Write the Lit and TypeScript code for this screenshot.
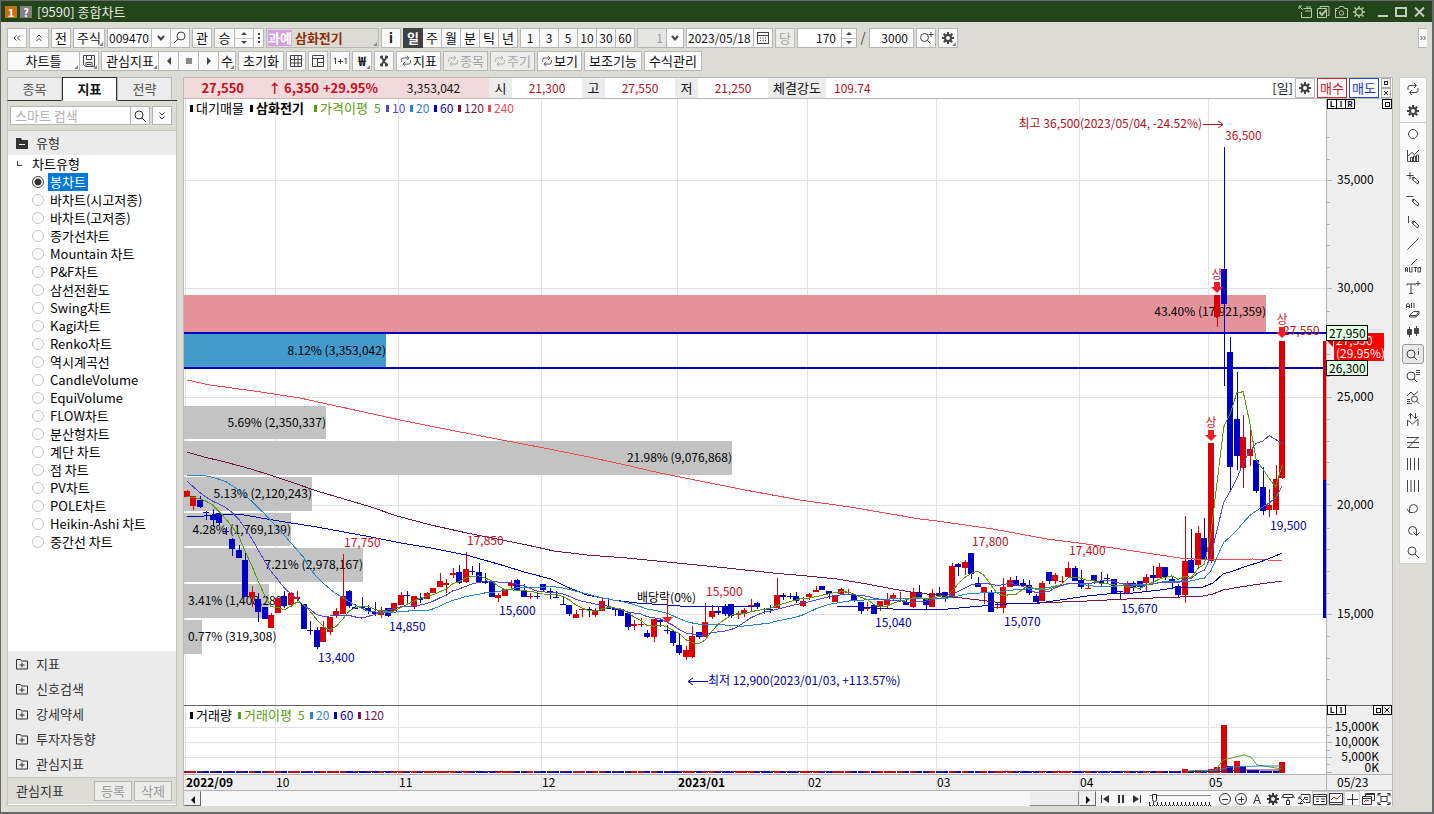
import { LitElement, html, svg, css, nothing } from "lit";
import { customElement, state, property } from "lit/decorators.js";
import { classMap } from "lit/directives/class-map.js";

/* ---------- icons ---------- */

const gearTeeth = [0, 45, 90, 135, 180, 225, 270, 315];
const gear = svg`
  ${gearTeeth.map((a) => svg`<rect x="7" y="2" width="2" height="3" fill="currentColor" stroke="none" transform="rotate(${a} 8 8)" />`)}
  <circle cx="8" cy="8" r="3" stroke-width="2" />`;
const cycle = svg`<path d="M3 9V6.5a2 2 0 0 1 2-2h6M9 2l2.500 2.500L9 7M13 7v2.500a2 2 0 0 1-2 2H5M7 9l-2.500 2.500L7 14" />`;
const lens = svg`<circle cx="7" cy="7" r="4" /><path d="M10 10l4 4" />`;
const pencil = svg`<path d="M7 8l2-1 5 5-1.500 2L8 10zM9 7l-1.500 3M12 14l2-2" />`;

const ICONS: Record<string, unknown> = {
  gear,
  cycle,
  lens,
  dblLeft: svg`<path d="M7.500 5.500L5 8l2.500 2.500M11 5.500L8.500 8l2.500 2.500" />`,
  dblUp: svg`<path d="M5.500 7.500L8 5l2.500 2.500M5.500 11L8 8.500l2.500 2.500" />`,
  dblDown: svg`<path d="M5.500 4.500L8 7l2.500-2.500M5.500 8.500L8 11l2.500-2.500" />`,
  dblRight: svg`<path d="M5.500 6l2 2-2 2M8.500 6l2 2-2 2" />`,
  down: svg`<path d="M5 6l3 3.500L11 6" stroke-width="2" />`,
  lensLeft: svg`<circle cx="9" cy="6" r="4" /><path d="M6 9l-4 4" />`,
  lensPlus: svg`<circle cx="6.500" cy="7.500" r="4" /><path d="M9.500 10.500l3 3M13 2v5M10.500 4.500h5" />`,
  dots: svg`<path d="M7 3h2v2H7zM7 7h2v2H7zM7 11h2v2H7z" fill="currentColor" stroke="none" />`,
  calendar: svg`<rect x="2.500" y="2.500" width="11" height="11" /><path d="M2 5.500h12M5 8h1M7.500 8h1M10 8h1M5 10.500h1M7.500 10.500h1M10 10.500h1" />`,
  save: svg`<path d="M2.500 2.500h11v11h-9l-2-2zM5.500 3v3.500h5V3M5 13V9.500h6V13M6 11.500h4" />`,
  left: svg`<path d="M10 4v8L6 8z" fill="currentColor" stroke="none" />`,
  right: svg`<path d="M6 4v8l4-4z" fill="currentColor" stroke="none" />`,
  stop: svg`<path d="M5 5h6v6H5z" fill="#888" stroke="none" />`,
  table: svg`<path d="M2.500 2.500h11v11h-11zM2 6.500h12M2 10h12M6.500 2v12M10 2v12" />`,
  layout: svg`<path d="M2.500 2.500h11v11h-11zM2 5.500h12M7.500 5v9M7 9.500h7" />`,
  oneToOne: svg`<path d="M2 6l1.500-1v6M12.500 6l1.500-1v6M6 8.500h5M8.500 6v5" />`,
  tool: svg`<path d="M6 2.500V5l4 6v2.500M10 2.500V5l-4 6v2.500" stroke-width="2" /><path d="M4.500 3v2.500M11.500 3v2.500M4.500 10.500V13M11.500 10.500V13" />`,
  export: svg`<path d="M2 2l4 4M2 5V2h3M6.500 4.500h8v9h-10V8M8 7h6M9 3h5" />`,
  checks: svg`<path d="M5 4V2.500h9v9H12.500M2.500 4.500h9v9h-9z" /><path d="M4.500 8l2.500 3 4-5" stroke-width="2" />`,
  camera: svg`<path d="M2.500 4.500h3l1-2h4l1 2h3v9h-12zM3 6.500h1" /><circle cx="8.500" cy="9" r="2.200" />`,
  sun: svg`<circle cx="8" cy="8" r="3.500" stroke-width="1.500" /><path d="M8 2v2M8 12v2M2 8h2M12 8h2M3.500 3.500l1.500 1.500M11 11l1.500 1.500M12.500 3.500L11 5M5 11l-1.500 1.500" stroke-width="1.500" />`,
  min: svg`<path d="M3 12h10" stroke-width="2" />`,
  max: svg`<rect x="3" y="4" width="10" height="8" stroke-width="2" />`,
  close: svg`<path d="M4 3.500l9 9M13 3.500l-9 9" stroke-width="2" />`,
  folderPlus: svg`<path d="M2.500 3.500h4l1 1.500h6v8h-11zM8 6.500v5M5.500 9h5" />`,
  folderMinus: svg`<path d="M2 3h5l1 2h6v9H2z" fill="currentColor" stroke="none" /><path d="M5 9.500h6" stroke="#fff" />`,
  circle: svg`<circle cx="8" cy="8" r="4.500" />`,
  barLine: svg`<path d="M2.500 2v11.500H14M5.500 13V9.500h2V13M8.500 13V8h2v5M11.500 13V7h2v6M3 8l4-3.500 2.500 2L14 2" />`,
  plusPen: svg`<path d="M5 2v7M1.500 5.500h7" />${pencil}`,
  hPen: svg`<path d="M1.500 4.500h7" />${pencil}`,
  vPen: svg`<path d="M3.500 2v7" />${pencil}`,
  line: svg`<path d="M2.500 13.500l11-11" />`,
  auto: svg`<path d="M6 7l6-6M.500 14v-4l1-1 1 1v4M.500 12h2M4.500 9v5h2.500V9M8.500 9.500h3.500M10.500 9v5M13 9.500h2.500V14H13z" />`,
  textPlus: svg`<path d="M2 5.500V4h8v1.500M6 4v9.500M4 13.500h4M13 1v5M10.500 3.500h5" />`,
  allErase: svg`<path d="M1.500 6V2.500l1.500-1 1.500 1V6M1.500 4.500h3M6.500 1v5M9 1v5M4.500 13.500l4-4h5.500l-3 4zM11 13.500V15l3-3.500V9.500M4.500 13.500V15H11" />`,
  candles: svg`<path d="M4.500 3v10M11.500 2v10" /><path d="M2.500 5.500h4v5h-4zM9.500 4.500h4v5h-4z" fill="currentColor" />`,
  lensInfo: svg`<circle cx="6" cy="8" r="4" /><path d="M9 11l3 3M13.500 5v4M13.500 2.500v1" />`,
  lensList: svg`<circle cx="6" cy="8" r="4" /><path d="M9 11l3 3M11 2.500h4M11 4.500h4M11 6.500h4" />`,
  zigLens: svg`<path d="M2 6l4-4 3 3 4-3.500M2 9.500h3M2 11.500h3M2 13.500h5" /><circle cx="9.500" cy="9" r="3" /><path d="M11.500 11l3 3" />`,
  zigArrows: svg`<path d="M2.500 14V8l5 4 5.500-5v7M5.500 7V1.500M3.500 3.500l2-2 2 2M10.500 1v5.500M8.500 4.500l2 2 2-2" />`,
  zLines: svg`<path d="M2 3.500h12M2 8.500h12M2 13.500h12M13 3.500l-10 10" />`,
  bars4a: svg`<path d="M2.500 2v12M5.500 2v12M9.500 2v12M13.500 2v12" />`,
  bars4b: svg`<path d="M2.500 2v12M6 2v12M9.500 2v12M13.500 2v12" />`,
  undo: svg`<path d="M4.500 8.500a4 4 0 1 1 4 4M2 9l2.500 3.500H8M4.500 12.500V8.500" />`,
  redo: svg`<path d="M11.500 8.500a4 4 0 1 0-4 4M11.500 7.500v6M8.500 10.500l3 3M14.500 10.500l-3 3" />`,
  first: svg`<path d="M4.500 4v8" /><path d="M12 4v8L6 8z" fill="currentColor" stroke="none" />`,
  pause: svg`<path d="M5 4h2v8H5zM9 4h2v8H9z" fill="currentColor" stroke="none" />`,
  last: svg`<path d="M11.500 4v8" /><path d="M4 4v8l6-4z" fill="currentColor" stroke="none" />`,
  zoomOut: svg`<circle cx="8" cy="8" r="5.500" /><path d="M5 8.500h6" />`,
  zoomIn: svg`<circle cx="8" cy="8" r="5.500" /><path d="M5 8.500h6M8.500 5.500v6" />`,
  letterForm: svg`<path d="M4.500 13L8 3.500 11.500 13M6 9.500h4" />`,
  brush: svg`<path d="M3 3.500h10v3H3zM3 5l-1.500 2M8 7v2.500M6.500 9.500h3v4h-3zM13 5l1.500 2" />`,
  windowBack: svg`<path d="M5 4.500V3.500h9v8h-4M8 6.500h4M9 8.500h3M3 6l6 6M3 8.500V6h2.500M9 7l-6 6M2 12.500h5" />`,
  sheet: svg`<path d="M1.500 3.500h13v10h-13zM2 5.500h12M4 8h3M9 8h4M4 10.500h3M9 10.500h4" />`,
  lineChart: svg`<path d="M1.500 2.500h13v11h-13zM2 11.500h12" /><path d="M3 9l3-3 3 2 4-4" stroke="#c22" />`,
  plus: svg`<path d="M8.500 3v11M3 8.500h11" />`,
  stack: svg`<path d="M5.500 5V2.500h9v7h-2M2.500 5.500h9v8h-9zM3 7.500h8M6 3.500h8" /><path d="M4 11l2-2 3 1" stroke="#c22" />`,
  expand: svg`<path d="M5 5.500h6v5H5zM2 5V2.500h3M11 2.500h3V5M14 11v2.500h-3M5 13.500H2V11M2 2.500l3 3M14 2.500l-3 3M14 13.500l-3-3M2 13.500l3-3" />`,
};

const icon = (name: string) =>
  html`<svg class="ic" viewBox="0 0 16 16" width="16" height="16" fill="none" stroke="currentColor" aria-hidden="true">${ICONS[name]}</svg>`;

const iconStyles = css`
  .ic { display: block; flex: none; width: 16px; height: 16px; }
  button, input, select { font: inherit; color: inherit; margin: 0; padding: 0; box-sizing: border-box; border-radius: 0; }
  button { cursor: pointer; }
`;

/* ---------- chart data ---------- */

// Each group: base offset, then "dir high top bottom low" rows in thirds of a pixel below y = 440.
const GROUPS: [number, string][] = [
  [0, `R 150 152 170 172|R 168 168 197 209|B 168 180 200 205|B 212 216 219 240|B 207 225 240 262|B 220 220 248 256|B 262 272 277 284|B 294 297 326 347|B 314 330 355 355|B 338 360 470 470|R 437 456 472 502|B 460 478 515 545|B 500 502 537 537|R 518 525 563 563|R 475 475 520 520|B 453 468 497 505|R 456 459 496 500|R 452 472 476 488|B 492 492 567 567|B 542 570 573 584|B 562 570 620 626|R 543 562 605 605|R 530 530 575 586|R 504 513 527 535|R 342 468 522 522|B 450 454 497 505|B 492 500 508 508|B 470 500 504 508|B 495 505 514 522|B 487 515 523 528|R 501 510 525 533|B 505 505 527 530|R 490 490 514 514|R 457 465 494 494|B 454 465 469 488|R 468 468 502 506|B 460 475 479 488|R 456 460 478 478|R 445 445 458 458|R 399 423 440 440|R 417 430 436 458|R 384 399 405 413|B 375 397 430 433|R 336 388 426 430|B 378 392 397 406|B 370 397 425 430|B 400 422 430 432|B 424 424 472 472|R 460 465 474 485|R 446 446 467 467|R 420 430 437 445|B 416 420 450 453|B 432 449 472 472|R 460 468 471 477|B 455 467 471 478|B 433 433 449 452|B 443 452 457 477|B 453 470 475 475`],
  [300, `B 170 192 196 196|B 195 195 222 228|R 210 223 233 233|R 207 207 210 232|B 200 207 210 230|R 203 210 225 230|R 172 183 212 212|B 175 203 206 206|B 205 205 210 228|B 208 208 228 228|B 220 220 261 270|R 240 252 258 270|R 235 252 255 262|B 270 280 290 293|R 238 238 290 305|B 233 240 245 262|B 255 270 274 282|B 273 273 308 318|B 280 316 340 344|R 318 330 350 360|R 257 288 350 354|B 276 276 292 298|R 190 246 292 292|R 195 213 231 236|B 202 213 220 226|B 192 202 221 228|B 193 193 227 233|R 212 223 226 236|R 204 210 223 230|R 178 195 198 213|B 186 190 202 208|B 203 208 211 222|B 196 206 209 220|R 113 165 204 204|B 158 165 170 180|B 158 168 171 178|B 155 168 183 190|R 172 184 198 202|R 158 162 172 180|R 138 150 155 155|B 139 139 150 150|B 153 153 163 177|R 166 166 186 186|R 143 147 162 162|R 147 155 160 165|B 164 164 180 186|B 186 186 213 222|R 186 200 206 213|B 194 194 221 221|R 182 182 200 214|R 160 178 195 203|R 160 166 174 182|R 157 173 176 180|B 180 187 195 195|R 145 156 200 205|B 135 156 170 178|B 178 178 195 207|R 148 160 200 200|B 141 160 167 170|B 157 157 175 185`],
  [0, `R 370 378 472 472|B 370 372 380 407|R 360 366 384 406|B 340 340 402 418|B 411 430 440 440|R 441 441 458 492|B 450 458 515 515|R 485 500 503 507|R 415 441 503 518|R 411 420 440 440|B 408 420 437 437|B 417 430 437 440|B 420 435 459 465|B 463 467 487 487|R 424 430 483 483|B 397 397 422 433|R 400 405 423 433|R 407 422 426 432|R 367 384 411 411|B 378 384 423 423|B 390 420 440 446|R 432 443 446 446|B 405 405 423 432|B 396 423 430 440|B 402 414 418 430|B 418 418 458 458|B 453 453 456 477|R 423 430 458 458|B 423 430 443 453|B 423 423 442 450|R 402 411 428 453|B 379 405 413 428|R 370 381 414 414|B 381 381 412 420|B 410 418 422 447|B 432 438 465 472|R 228 364 465 488|B 267 361 398 398|R 258 280 374 388|B 234 295 357 357|R 9 9 362 370`],
  [-990, `R 556 556 622 650|B 110 477 581 828|B 682 726 1070 1140|B 786 927 1038 1080|R 915 981 1075 1134|R 955 1018 1037 1068|B 1050 1050 1142 1150|B 1070 1131 1202 1215|R 1137 1185 1200 1220|R 1065 1107 1200 1215|R 693 693 1103 1106`],
];

interface Candle { up: boolean; x: number; high: number; top: number; bottom: number; low: number; }

const FIRST_X = 187;
const STEP = 6.48;
const xAt = (i: number) => FIRST_X + STEP * i;

const candles: Candle[] = GROUPS.flatMap(([base, rows]) =>
  rows.split("|").map((r) => {
    const [dir, ...v] = r.split(" ");
    const [high, top, bottom, low] = v.map((n) => 440 + (Number(n) + base) / 3);
    return { up: dir === "R", x: 0, high, top, bottom, low };
  }),
).map((c, i) => ({ ...c, x: Math.round(xAt(i)) }));

const closes = candles.map((c) => (c.up ? c.top : c.bottom));

// Averages reach back before the first visible bar, so their opening points are listed.
function average(period: number, opening: number[]): string {
  const pts: string[] = [];
  closes.forEach((_, i) => {
    let y: number;
    if (i < period - 1) {
      if (i >= opening.length) return;
      y = 440 + opening[i] / 3;
    } else {
      y = closes.slice(i - period + 1, i + 1).reduce((a, b) => a + b, 0) / period;
    }
    pts.push(`${xAt(i).toFixed(1)},${y.toFixed(1)}`);
  });
  return pts.join(" ");
}

const AVERAGES: { color: string; points: string }[] = [
  { color: "#f04850", points: "187,380 210,385 254,391 300,398 350,409 400,420 450,430 502,440 544,448 584,456 621,464 660,473 700,481 745,490 800,500 850,507 920,519 937,521 993,529 1047,539 1079,543 1120,549 1153,554 1180,558 1207,560 1253,559 1282,561" },
  { color: "#701845", points: "187,452 204,457 221,461 244,467 267,474 291,482 317,491 344,499 371,507 397,516 431,525 467,533 497,539 527,545 554,551 587,555 627,558 677,563 727,568 773,573 807,576 837,579 867,584 893,589 917,593 937,595 953,597 970,599 987,601 1003,603 1037,603 1087,601 1127,599 1180,597 1203,596 1213,594 1223,590 1240,587 1260,584 1282,581" },
  { color: "#0000a8", points: "187,517 204,516 221,514 244,515 267,519 291,523 317,527 344,532 371,537 401,543 431,548 466,555 484,560 505,566 524,572 551,579 567,587 587,595 613,600 637,603 667,605 693,607 760,606 837,606 860,607 893,609 948,609 970,607 1007,604 1040,603 1053,601 1087,596 1107,594 1133,593 1160,590 1180,587 1203,587 1213,583 1223,574 1233,571 1247,566 1260,562 1273,557 1282,553" },
  { color: "#2c86c4", points: average(20, [105, 105, 107, 108, 112, 118, 125, 137, 151, 167, 184, 203, 222, 243, 264, 285, 308, 330, 352]) },
  { color: "#5448d0", points: average(10, [124, 141, 158, 172, 184, 192, 203, 218, 238]) },
  { color: "#5c9a10", points: average(5, [170, 172, 177, 184]) },
];

const PROFILE = [
  { y: 295, h: 37, end: 1266, color: "#e4939b", text: "43.40% (17,921,359)" },
  { y: 334, h: 33, end: 386, color: "#449acb", text: "8.12% (3,353,042)" },
  { y: 406, h: 33, end: 326, color: "#c3c3c3", text: "5.69% (2,350,337)" },
  { y: 441, h: 34, end: 732, color: "#c3c3c3", text: "21.98% (9,076,868)" },
  { y: 477, h: 34, end: 312, color: "#c3c3c3", text: "5.13% (2,120,243)" },
  { y: 513, h: 33, end: 291, color: "#c3c3c3", text: "4.28% (1,769,139)" },
  { y: 548, h: 34, end: 363, color: "#c3c3c3", text: "7.21% (2,978,167)" },
  { y: 584, h: 34, end: 269, color: "#c3c3c3", text: "3.41% (1,408,289)" },
  { y: 620, h: 34, end: 202, color: "#c3c3c3", text: "0.77% (319,308)" },
];

const MONTHS = [
  { x: 185, label: "2022/09", bold: true }, { x: 275, label: "10" }, { x: 398, label: "11" },
  { x: 541, label: "12" }, { x: 677, label: "2023/01", bold: true }, { x: 807, label: "02" },
  { x: 936, label: "03" }, { x: 1079, label: "04" }, { x: 1208, label: "05" },
];

const PEAKS = [
  [344, 547, "17,750"], [467, 545, "17,850"], [706, 596, "15,500"], [972, 546, "17,800"],
  [1069, 555, "17,400"], [1225, 140, "36,500"], [1283, 335, "27,550"],
] as const;
const TROUGHS = [
  [318, 662, "13,400"], [389, 631, "14,850"], [499, 615, "15,600"], [875, 627, "15,040"],
  [1004, 626, "15,070"], [1121, 613, "15,670"], [1270, 530, "19,500"],
] as const;
const LIMITS = [[1217, 282], [1282, 327], [1211, 430]];

const LEGEND = [
  { x: 190, label: "대기매물", color: "#000" }, { x: 250, label: "삼화전기", color: "#000", bold: true },
  { x: 314, label: "가격이평", color: "#5c9a10", extra: "5" }, { x: 386, label: "10", color: "#5448d0" },
  { x: 410, label: "20", color: "#2c86c4" }, { x: 434, label: "60", color: "#0000a8" },
  { x: 458, label: "120", color: "#701845" }, { x: 488, label: "240", color: "#f04850" },
];
const VOL_LEGEND = [
  { x: 190, label: "거래량", color: "#000" }, { x: 238, label: "거래이평", color: "#5c9a10", extra: "5" },
  { x: 310, label: "20", color: "#2c86c4" }, { x: 334, label: "60", color: "#0000a8" },
  { x: 358, label: "120", color: "#701845" },
];

const VOL_HEIGHTS: Record<number, number> = {
  154: 4, 156: 3, 158: 4, 159: 6, 160: 48, 161: 7, 162: 12, 163: 7, 164: 3, 165: 3, 169: 11,
};
// Volume bars are coloured by the change in turnover, which differs from the candle on these days.
const VOL_UP = new Set([160, 162]);
const VOL_DOWN = new Set([163, 164, 167, 168]);

@customElement("price-chart")
export class PriceChart extends LitElement {
  static styles = css`
    :host { display: block; flex: 1; min-height: 0; background: #fff; }
    svg { display: block; width: 100%; height: 100%; }
    text { font: 12px "Noto Sans CJK KR", "Noto Sans CJK SC", sans-serif; }
    .crisp { shape-rendering: crispEdges; }
    .bold { font-weight: 700; }
    .hangul { font-size: 13px; }
    .tiny { font-size: 8px; font-weight: 700; text-anchor: middle; }
    .end { text-anchor: end; }
    .mid { text-anchor: middle; }
  `;

  private mark(x: number, y: number, label: string) {
    return svg`<rect x=${x + 0.5} y=${y + 0.5} width="9" height="9" fill="#fff" stroke="#000" class="crisp" />
      ${label === "□"
        ? svg`<rect x=${x + 3.5} y=${y + 3.5} width="4" height="4" fill="none" stroke="#000" class="crisp" />`
        : label === "×"
          ? svg`<path d="M${x + 2.5} ${y + 2.5}l5 5m0 -5l-5 5" stroke="#000" />`
          : svg`<text class="tiny" x=${x + 5} y=${y + 8}>${label}</text>`}`;
  }

  private legend(items: typeof LEGEND, y: number) {
    return items.map((l) => svg`
      <rect x=${l.x} y=${y - 8} width="3" height="7" fill=${l.color} />
      <text class=${/\d/.test(l.label) ? "" : l.bold ? "hangul bold" : "hangul"} x=${l.x + 6} y=${y} fill=${l.color}>${l.label}</text>
      ${l.extra ? svg`<text x=${l.x + 60} y=${y} fill=${l.color}>${l.extra}</text>` : nothing}`);
  }

  render() {
    const rows = [180, 288, 397, 505, 614];
    const ticks: number[] = [];
    for (let p = 37; p >= 12; p--) if (p % 5) ticks.push(Math.round(180.3 + (35 - p) * 21.7));
    return html`<svg viewBox="184 99 1208 692" preserveAspectRatio="xMinYMin meet" role="img" aria-label="삼화전기 일봉 차트">
      <rect x="1326" y="99" width="67" height="692" fill="#efefef" />
      <rect x="184" y="774" width="1142" height="17" fill="#efefef" />
      <g class="crisp" stroke="#e2e2e2">
        ${MONTHS.map((m) => svg`<path d="M${m.x + 0.5} 99V791" />`)}
        ${rows.map((y) => svg`<path d="M184 ${y + 0.5}H1326" />`)}
        ${[727, 742, 757].map((y) => svg`<path d="M184 ${y + 0.5}H1326" />`)}
      </g>
      <g class="crisp" stroke="#b4b4b4">
        <path d="M1326.500 99V791M184 774.500H1393M184 790.500H1393" />
        ${[...rows, 727, 742, 757, 772].map((y) => svg`<path d="M1326 ${y + 0.5}h6" />`)}
        ${[...ticks, 735, 750, 764].map((y) => svg`<path d="M1326 ${y + 0.5}h4" />`)}
      </g>
      <path class="crisp" d="M184 705.500H1393" stroke="#606060" />

      ${PROFILE.map((b) => svg`<rect class="crisp" x="184" y=${b.y} width=${b.end - 184} height=${b.h} fill=${b.color} />`)}
      ${PROFILE.map((b) => b.end < 290
        ? svg`<text x="188" y=${b.y + 21}>${b.text}</text>`
        : svg`<text class="end" x=${b.end} y=${b.y + 21}>${b.text}</text>`)}

      <path class="crisp" d="M184 333H1326M184 368H1326" stroke="#0000b4" stroke-width="2" />

      <g class="crisp">
        ${candles.map((c) => {
          const color = c.up ? "#dc0000" : "#0000c4";
          const top = Math.round(c.top);
          const high = Math.round(c.high);
          return svg`<rect x=${c.x} y=${high} width="1" height=${Math.max(1, Math.round(c.low) - high)} fill=${color} />
            <rect x=${c.x - 3} y=${top} width="6" height=${Math.max(1, Math.round(c.bottom) - top)} fill=${color} />`;
        })}
      </g>
      <g class="crisp" fill="none">
        ${AVERAGES.map((a) => svg`<polyline points=${a.points} stroke=${a.color} />`)}
      </g>
      <path class="crisp" d="M1324.500 341V480" stroke="#dc0000" stroke-width="3" />
      <path class="crisp" d="M1324.500 480V618" stroke="#0000c4" stroke-width="3" />

      ${this.legend(LEGEND, 113)}
      ${PEAKS.map(([x, y, t]) => svg`<text x=${x} y=${y} fill="#c8101c">${t}</text>`)}
      ${TROUGHS.map(([x, y, t]) => svg`<text x=${x} y=${y} fill="#0000a8">${t}</text>`)}
      ${LIMITS.map(([x, y]) => svg`
        <path d="M${x - 3} ${y}h6v5h3l-6 6l-6 -6h3z" fill="#f41c24" />
        <text class="mid" x=${x} y=${y - 3} fill="#d0202c">상</text>`)}
      <path d="M667.500 603V618" stroke="#dc0000" class="crisp" />
      <path d="M662 617h11l-5.500 6z" fill="#f41c24" />
      <text x="637" y="602">배당락(0%)</text>
      <text class="end" x="1202" y="128" fill="#b01018">최고 36,500(2023/05/04, -24.52%)</text>
      <path d="M1203 124.500H1223M1218 121l5 3.500l-5 3.500" stroke="#b01018" fill="none" />
      <text x="708" y="685" fill="#0000a0">최저 12,900(2023/01/03, +113.57%)</text>
      <path d="M708 681.500H688M693 678l-5 3.500l5 3.500" stroke="#0000a0" fill="none" />

      ${[35, 30, 25, 20, 15].map((p, i) => svg`<text x="1337" y=${rows[i] + 4}>${p},000</text>`)}
      <rect x="1334" y="333" width="50" height="28" fill="#ff0000" />
      <path d="M1327 341h6v6z" fill="#e00000" />
      <text x="1336" y="345" fill="#fff">27,550</text>
      <text x="1336" y="358" fill="#fff">(29.95%)</text>
      ${[[325, "27,950"], [360, "26,300"]].map(([y, t]) => svg`
        <rect class="crisp" x="1326.500" y=${Number(y) + 0.5} width="41" height="15" fill="#e0ffe0" stroke="#000" />
        <text x="1329" y=${Number(y) + 13}>${t}</text>`)}
      ${this.mark(1327, 99, "L")}${this.mark(1336, 99, "I")}${this.mark(1345, 99, "R")}${this.mark(1382, 99, "□")}

      ${this.legend(VOL_LEGEND as typeof LEGEND, 720)}
      <g class="crisp">
        ${candles.map((c, i) => {
          const h = VOL_HEIGHTS[i] ?? 2;
          const up = VOL_UP.has(i) || (c.up && !VOL_DOWN.has(i));
          return svg`<rect x=${c.x - 3} y=${773 - h} width="6" height=${h} fill=${up ? "#dc0000" : "#0000c4"} />`;
        })}
        <path d="M184 771.500H1186" stroke="#701845" stroke-dasharray="6 7" />
      </g>
      <g fill="none">
        <path d="M1186 771H1215L1223 760L1244 755L1251 757L1257 765L1270 767L1282 769" stroke="#5c9a10" />
        <path d="M1190 771L1218 770L1230 767L1258 766H1282" stroke="#2c86c4" />
        <path d="M1190 771.500H1222L1240 770H1282" stroke="#701845" />
      </g>
      <text class="end" x="1379" y="731">15,000K</text>
      <text class="end" x="1379" y="746">10,000K</text>
      <text class="end" x="1379" y="761">5,000K</text>
      <text class="end" x="1379" y="772">0K</text>
      ${this.mark(1327, 705, "L")}${this.mark(1336, 705, "I")}${this.mark(1373, 705, "□")}${this.mark(1382, 705, "×")}
      ${MONTHS.map((m) => svg`<text class=${m.bold ? "bold" : ""} x=${m.x + 1} y="787">${m.label}</text>`)}
      <text x="1337" y="787">05/23</text>
    </svg>`;
  }
}

/* ---------- left panel ---------- */

const CHART_TYPES = [
  "봉차트", "바차트(시고저종)", "바차트(고저종)", "종가선차트", "Mountain 차트", "P&F차트", "삼선전환도",
  "Swing차트", "Kagi차트", "Renko차트", "역시계곡선", "CandleVolume", "EquiVolume", "FLOW차트", "분산형차트",
  "계단 차트", "점 차트", "PV차트", "POLE차트", "Heikin-Ashi 차트", "중간선 차트",
];

@customElement("indicator-panel")
export class IndicatorPanel extends LitElement {
  @state() private selected = 0;
  @state() private tab = 1;

  static styles = [iconStyles, css`
    :host { display: flex; flex-direction: column; width: 170px; flex: none; color: #1a1a1a; }
    .tabs { display: flex; height: 24px; padding-right: 5px; border-bottom: 1px solid #303030; box-sizing: border-box; }
    .tab { flex: 1; height: 24px; border: 1px solid #b8b8b8; border-bottom: 1px solid #303030; background: #ececec; color: #555; }
    .tab.on { background: #fff; border: 1px solid #303030; border-bottom-color: #fff; font-weight: 700; color: #111; }
    .search { display: flex; padding: 5px 4px 5px 2px; height: 29px; box-sizing: border-box; border: solid #c4c4c0; border-width: 0 1px; }
    .search input { flex: 1; min-width: 0; border: 1px solid #b4b4b4; background: #fff; padding: 0 4px; }
    .search input::placeholder { color: #b0b0b0; opacity: 1; }
    .search button { width: 20px; margin-left: -1px; border: 1px solid #b4b4b4; background: #fafafa; display: grid; place-items: center; color: #333; }
    .search .more { margin-left: 2px; }
    .box { flex: 1; display: flex; flex-direction: column; border: 1px solid #c4c4c0; min-height: 0; }
    .head { display: flex; align-items: center; gap: 6px; height: 24px; padding-left: 6px; background: #ebebeb; color: #333; border: 0; width: 100%; flex: none; text-align: left; line-height: 18px; }
    .tree { flex: 1; min-height: 0; overflow: hidden; background: #fff; }
    .root { height: 18px; line-height: 18px; padding-left: 24px; position: relative; color: #000; }
    .root::before { content: ""; position: absolute; left: 9px; top: 6px; width: 4px; height: 4px; border: solid #444; border-width: 0 0 1px 1px; }
    .opt { display: flex; align-items: center; height: 18px; padding-left: 24px; gap: 4px; color: #000; }
    .opt input { appearance: none; width: 12px; height: 12px; border: 1px solid #c4c4c4; border-radius: 50%; background: #fff; flex: none; }
    .opt input:checked { border-color: #444; background: radial-gradient(circle, #333 3px, #fff 4px); }
    .opt span { line-height: 18px; padding: 0 2px; }
    .opt input:checked + span { background: #0078d7; color: #fff; }
    .groups { padding-bottom: 1px; background: #ebebeb; }
    .groups .head { height: 25px; }
    .foot { display: flex; align-items: center; height: 28px; padding: 0 4px 0 8px; border-top: 1px solid #c4c4c0; border-bottom: 1px solid #fff; gap: 2px; box-sizing: border-box; }
    .foot span { flex: 1; color: #333; }
    .foot button { width: 38px; height: 20px; border: 1px solid #b8b8b8; background: #ececea; color: #9a9a9a; line-height: 18px; }
  `];

  render() {
    return html`
      <div class="tabs" role="tablist">
        ${["종목", "지표", "전략"].map((t, i) => html`<button role="tab" class=${classMap({ tab: true, on: i === this.tab })} @click=${() => (this.tab = i)}>${t}</button>`)}
      </div>
      <div class="search">
        <input type="text" placeholder="스마트 검색" aria-label="스마트 검색" />
        <button aria-label="검색">${icon("lens")}</button>
        <button class="more" aria-label="더보기">${icon("dblDown")}</button>
      </div>
      <div class="box">
        <button class="head">${icon("folderMinus")}유형</button>
        <div class="tree">
          <div class="root">차트유형</div>
          ${CHART_TYPES.map((t, i) => html`<label class="opt"><input type="radio" name="type" .checked=${i === this.selected} @change=${() => (this.selected = i)} /><span>${t}</span></label>`)}
        </div>
        <div class="groups">
          ${["지표", "신호검색", "강세약세", "투자자동향", "관심지표"].map((t) => html`<button class="head">${icon("folderPlus")}${t}</button>`)}
        </div>
        <div class="foot"><span>관심지표</span><button disabled>등록</button><button disabled>삭제</button></div>
      </div>`;
  }
}

/* ---------- right tool strip ---------- */

const TOOLS: [string, string][] = [
  ["cycle", "새로고침"], ["gear", "설정"], ["circle", "원"], ["barLine", "차트"], ["plusPen", "십자선"], ["hPen", "수평선"],
  ["vPen", "수직선"], ["line", "추세선"], ["auto", "자동추세선"], ["textPlus", "문자"], ["allErase", "모두 지우기"], ["candles", "봉"],
  ["lensInfo", "정보"], ["lensList", "목록"], ["zigLens", "패턴 검색"], ["zigArrows", "지그재그"], ["zLines", "피보나치"],
  ["bars4a", "시간대"], ["bars4b", "등분선"], ["undo", "되돌리기"], ["redo", "다시하기"], ["lens", "확대"],
];

@customElement("tool-strip")
export class ToolStrip extends LitElement {
  static styles = [iconStyles, css`
    :host { display: flex; flex-direction: column; align-self: flex-start; width: 28px; flex: none; background: #fafafa; border: 1px solid #d0d0cc; box-sizing: border-box; color: #444; }
    button { height: 22px; border: 0; background: none; display: grid; place-items: center; }
    .sep { border-bottom: 1px solid #c8c8c8; height: 23px; }
    .on { border: 1px solid #999; border-radius: 3px; background: #e8e8e8; height: 20px; margin: 1px 2px; }
  `];
  render() {
    return TOOLS.map(([n, label], i) => html`<button class=${classMap({ sep: i === 1, on: n === "lensInfo" })} aria-label=${label}>${icon(n)}</button>`);
  }
}

/* ---------- toolbars ---------- */

@customElement("spin-buttons")
export class SpinButtons extends LitElement {
  @property() label = "";
  static styles = [iconStyles, css`
    :host { display: flex; flex-direction: column; width: 16px; height: 20px; box-sizing: border-box; border: 1px solid #b4b4b4; background: #fafafa; }
    button { flex: 1; min-height: 0; border: 0; background: none; display: grid; place-items: center; }
    button + button { border-top: 1px solid #c4c4c4; }
    svg { display: block; fill: #444; }
  `];
  render() {
    return html`<button aria-label="${this.label} 증가"><svg width="6" height="3"><path d="M0 3l3-3 3 3z" /></svg></button>
      <button aria-label="${this.label} 감소"><svg width="6" height="3"><path d="M0 0l3 3 3-3z" /></svg></button>`;
  }
}

@customElement("chart-toolbars")
export class ChartToolbars extends LitElement {
  @state() private period = 0;

  static styles = [iconStyles, css`
    :host { display: flex; flex-direction: column; gap: 3px; padding: 6px 5px 0 6px; color: #111; }
    .row { display: flex; gap: 2px; height: 20px; align-items: stretch; }
    .grp { display: flex; }
    .grp > * + * { margin-left: -1px; }
    button { position: relative; display: flex; align-items: center; justify-content: center; height: 20px; border: 1px solid #b8b8b4; background: #fafafa; white-space: nowrap; line-height: 18px; color: #111; }
    button .ic { color: #444; }
    .mono { font-size: 12px; }
    .bold { font-weight: 700; }
    .tri::after { content: ""; position: absolute; right: 1px; bottom: 1px; border: 2px solid; border-color: transparent #888 #888 transparent; }
    .dark { background: #404040; color: #fff; border-color: #404040; font-weight: 700; z-index: 1; }
    .off, .off .ic { color: #a4a4a4; }
    .off { background: #ececea; }
    .w11 { width: 11px; } .w18 { width: 18px; } .w20 { width: 20px; } .w21 { width: 21px; }
    .w32 { width: 32px; } .w45 { width: 45px; } .w46 { width: 46px; } .w58 { width: 58px; } .w73 { width: 73px; }
    .w68 { width: 68px; } .w113 { width: 113px; }
    input, select { height: 20px; border: 1px solid #b4b4b4; background: #fff; font-size: 12px; padding: 0 1px 2px; color: #111; }
    input.r { text-align: right; padding-right: 5px; }
    select { appearance: none; width: 47px; padding: 0 20px 2px 0; text-align: right; text-align-last: right; background: #e6e6e4; color: #999; opacity: 1; }
    .sel { position: relative; display: flex; }
    .sel .ic { position: absolute; right: 1px; top: 1px; padding: 1px 0; background: #fafafa; border-left: 1px solid #b4b4b4; color: #444; pointer-events: none; }
    .name { justify-content: flex-start; gap: 3px; background: #dcdbd6; color: #8c3008; font-weight: 700; padding-left: 1px; }
    .name .tag { background: #d49ee4; color: #fff; line-height: 16px; }
    .slash { width: 8px; text-align: center; line-height: 18px; color: #444; }
    .end { margin-left: auto; width: 9px; overflow: hidden; border-right: 0; }
    .tight { gap: 0; }
    .tight .ic { margin-left: -1px; width: 14px; }
  `];

  render() {
    const periods = ["일", "주", "월", "분", "틱", "년"];
    const minutes = ["1", "3", "5", "10", "30", "60"];
    return html`
      <div class="row">
        <button class="w20" aria-label="접기">${icon("dblLeft")}</button>
        <button class="w20" aria-label="위로">${icon("dblUp")}</button>
        <button class="w20">전</button>
        <button class="w32 tri">주식</button>
        <div class="grp">
          <input class="w45" type="text" .value=${"009470"} aria-label="종목코드" />
          <button class="w20" aria-label="종목 목록">${icon("down")}</button>
          <button class="w20" aria-label="종목 검색">${icon("lensLeft")}</button>
        </div>
        <button class="w20">관</button>
        <div class="grp">
          <button class="w21">승</button>
          <spin-buttons class="w20" label="종목"></spin-buttons>
          <button class="w11" aria-label="메뉴">${icon("dots")}</button>
        </div>
        <button class="w113 name tri"><span class="tag">과예</span>삼화전기</button>
        <button class="w20 bold" aria-label="종목 정보">i</button>
        <div class="grp">
          ${periods.map((p, i) => html`<button class=${classMap({ w20: true, dark: i === this.period })} @click=${() => (this.period = i)}>${p}</button>`)}
        </div>
        <div class="grp">${minutes.map((m) => html`<button class="w20 mono">${m}</button>`)}</div>
        <div class="sel"><select disabled aria-label="주기"><option>1</option></select>${icon("down")}</div>
        <div class="grp">
          <input class="w68" type="text" .value=${"2023/05/18"} aria-label="조회일" />
          <button class="w20" aria-label="달력">${icon("calendar")}</button>
        </div>
        <button class="w20 off">당</button>
        <div class="grp">
          <input class="w45 r" type="text" .value=${"170"} aria-label="표시 개수" />
          <spin-buttons label="표시 개수"></spin-buttons>
        </div>
        <span class="slash">/</span>
        <input class="w45 r" type="text" .value=${"3000"} aria-label="전체 개수" />
        <button class="w20" aria-label="조회">${icon("lensPlus")}</button>
        <button class="w20 tri" aria-label="설정">${icon("gear")}</button>
        <button class="end" aria-label="더보기">${icon("dblRight")}</button>
      </div>
      <div class="row">
        <div class="grp">
          <button class="w73 tri">차트틀</button>
          <button class="w20 tri" aria-label="저장">${icon("save")}</button>
        </div>
        <div class="grp">
          <button class="w58 tri">관심지표</button>
          <button class="w21" aria-label="이전">${icon("left")}</button>
          <button class="w21" aria-label="정지">${icon("stop")}</button>
          <button class="w21" aria-label="다음">${icon("right")}</button>
          <button class="w18 tri">수</button>
        </div>
        <button class="w46">초기화</button>
        <button class="w20" aria-label="표">${icon("table")}</button>
        <button class="w20" aria-label="분할">${icon("layout")}</button>
        <button class="w20" aria-label="1+1">${icon("oneToOne")}</button>
        <button class="w20 tri bold">₩</button>
        <button class="w20" aria-label="도구">${icon("tool")}</button>
        <button class="w45 tight">${icon("cycle")}지표</button>
        <button class="w45 tight off">${icon("cycle")}종목</button>
        <button class="w45 tight off">${icon("cycle")}주기</button>
        <button class="w45 tight">${icon("cycle")}보기</button>
        <button class="w58">보조기능</button>
        <button class="w58">수식관리</button>
      </div>`;
  }
}

/* ---------- window ---------- */

@customElement("app-root")
export class AppRoot extends LitElement {
  static styles = [iconStyles, css`
    :host {
      display: flex; flex-direction: column; height: 100vh; box-sizing: border-box;
      font: 13px "Noto Sans CJK KR", "Noto Sans CJK SC", sans-serif; line-height: 18px;
      background: #dcdbd6; border: solid #686868; border-width: 1px 2px 2px 1px; overflow: hidden;
    }
    .title { display: flex; align-items: center; height: 21px; flex: none; background: #24451c; color: #e4e8e0; padding: 0 4px; gap: 3px; }
    .badge { width: 12px; height: 12px; line-height: 12px; text-align: center; font-size: 11px; font-weight: 700; background: #c87010; color: #fff; }
    .badge.q { background: #808080; }
    .title h1 { font: inherit; margin: 0 auto 0 2px; }
    .title button { border: 0; background: none; color: #b4c8ac; width: 18px; height: 18px; margin-left: -3px; display: grid; place-items: center; }
    .title .win { color: #c4ccbc; }
    .title .gap { margin-left: 3px; }
    .main { flex: 1; min-height: 0; display: flex; gap: 6px; padding: 6px 5px 6px 6px; }
    .chart { flex: 1; min-width: 0; display: flex; flex-direction: column; border: 1px solid #b8b8b4; border-bottom: 0; }
    .quote { display: flex; align-items: stretch; height: 20px; line-height: 20px; background: #fff; border-bottom: 1px solid #b8b8b4; flex: none; font-size: 12px; color: #b01018; }
    .pink { display: flex; width: 305px; background: #f2d9db; color: #c80c18; }
    .pink b { font-size: 13px; }
    .price { width: 60px; text-align: right; }
    .diff { width: 75px; text-align: right; }
    .rate { width: 59px; text-align: right; }
    .vol { flex: 1; text-align: center; color: #111; }
    .k { background: #ececec; color: #111; font-size: 13px; width: 23px; text-align: center; }
    .k.wide { width: 58px; }
    .v { width: 70px; text-align: center; }
    .v.l { text-align: left; padding-left: 8px; }
    .right { margin-left: auto; display: flex; align-items: center; gap: 2px; color: #222; font-size: 13px; padding-right: 1px; }
    .right button { height: 20px; display: grid; place-items: center; border: 1px solid #b8b8b8; background: #fafafa; line-height: 18px; width: 20px; color: #444; }
    .right .buy { width: 30px; border-color: #d02830; color: #c81c28; }
    .right .sell { width: 30px; border-color: #2848c0; color: #1c3cc0; }
    .mini { display: flex; flex-direction: column; }
    .right .mini button { width: 10px; height: 10px; border-color: #aaa; background: #f4f4f4; }
    .bottom { display: flex; align-items: center; height: 15px; background: #f8f8f8; flex: none; color: #333; }
    .arrow { width: 17px; height: 15px; border: solid; border-width: 1px; border-color: #e8e8e8 #666 #666 #e8e8e8; background: #f0f0f0; display: grid; place-items: center; overflow: hidden; color: #000; }
    .track { flex: 1; display: flex; justify-content: flex-end; }
    .thumb { width: 50px; height: 15px; box-sizing: border-box; border: 1px solid; border-color: #f8f8f8 #888 #888 #f8f8f8; background: #ececec; }
    .tools { display: flex; width: 296px; box-sizing: border-box; padding-left: 1px; }
    .tools button { width: 16px; height: 15px; border: 0; background: none; display: grid; place-items: center; overflow: hidden; }
    .tools .boxed { outline: 1px solid #ccc; outline-offset: -1px; }
    .slider { width: 62px; height: 15px; margin: 0 6px 0 4px; display: block; appearance: none; border-bottom: 1px dotted #222; background:
      repeating-linear-gradient(90deg, #222 0 1px, transparent 1px 4px) 0 11px / 100% 3px no-repeat,
      linear-gradient(#888, #888) 0 4px / 100% 1px no-repeat; }
    .slider::-webkit-slider-thumb { appearance: none; width: 5px; height: 8px; border: 1px solid #222; background: #fff; border-radius: 0 0 3px 3px; }
  `];

  render() {
    const tools = ["zoomOut", "zoomIn", "letterForm", "gear", "brush", "windowBack", "sheet", "lineChart", "plus", "stack", "expand"];
    const names = ["축소", "확대", "글자", "설정", "서식", "창 이동", "표", "차트", "십자선", "겹치기", "전체화면"];
    return html`
      <header class="title">
        <span class="badge">1</span><span class="badge q">?</span>
        <h1>[9590] 종합차트</h1>
        <button aria-label="내보내기">${icon("export")}</button>
        <button aria-label="선택">${icon("checks")}</button>
        <button aria-label="화면 캡처">${icon("camera")}</button>
        <button aria-label="설정">${icon("sun")}</button>
        <button class="win gap" aria-label="최소화">${icon("min")}</button>
        <button class="win" aria-label="최대화">${icon("max")}</button>
        <button class="win" aria-label="닫기">${icon("close")}</button>
      </header>
      <chart-toolbars></chart-toolbars>
      <main class="main">
        <indicator-panel></indicator-panel>
        <section class="chart">
          <div class="quote">
            <div class="pink">
              <b class="price">27,550</b><b class="diff">↑ 6,350</b><b class="rate">+29.95%</b><span class="vol">3,353,042</span>
            </div>
            <span class="k">시</span><span class="v">21,300</span>
            <span class="k">고</span><span class="v">27,550</span>
            <span class="k">저</span><span class="v">21,250</span>
            <span class="k wide">체결강도</span><span class="v l">109.74</span>
            <div class="right">
              <span>[일]</span>
              <button aria-label="설정">${icon("gear")}</button>
              <button class="buy">매수</button>
              <button class="sell">매도</button>
              <div class="mini">
                <button aria-label="최대화"><svg width="6" height="6" fill="none" stroke="#222"><rect x="1.500" y="1.500" width="3" height="3" /></svg></button>
                <button aria-label="닫기"><svg width="6" height="6" stroke="#222"><path d="M1 1l4 4M5 1L1 5" /></svg></button>
              </div>
            </div>
          </div>
          <price-chart></price-chart>
          <div class="bottom">
            <button class="arrow" aria-label="왼쪽으로">${icon("left")}</button>
            <div class="track"><div class="thumb"></div></div>
            <button class="arrow" aria-label="오른쪽으로">${icon("right")}</button>
            <div class="tools">
              <button aria-label="처음">${icon("first")}</button>
              <button aria-label="일시정지">${icon("pause")}</button>
              <button aria-label="끝">${icon("last")}</button>
              <input class="slider" type="range" min="0" max="100" .value=${"5"} aria-label="재생 속도" />
              ${tools.map((t, i) => html`<button class=${classMap({ boxed: i > 5 && i < 9 })} aria-label=${names[i]}>${icon(t)}</button>`)}
            </div>
          </div>
        </section>
        <tool-strip></tool-strip>
      </main>`;
  }
}
